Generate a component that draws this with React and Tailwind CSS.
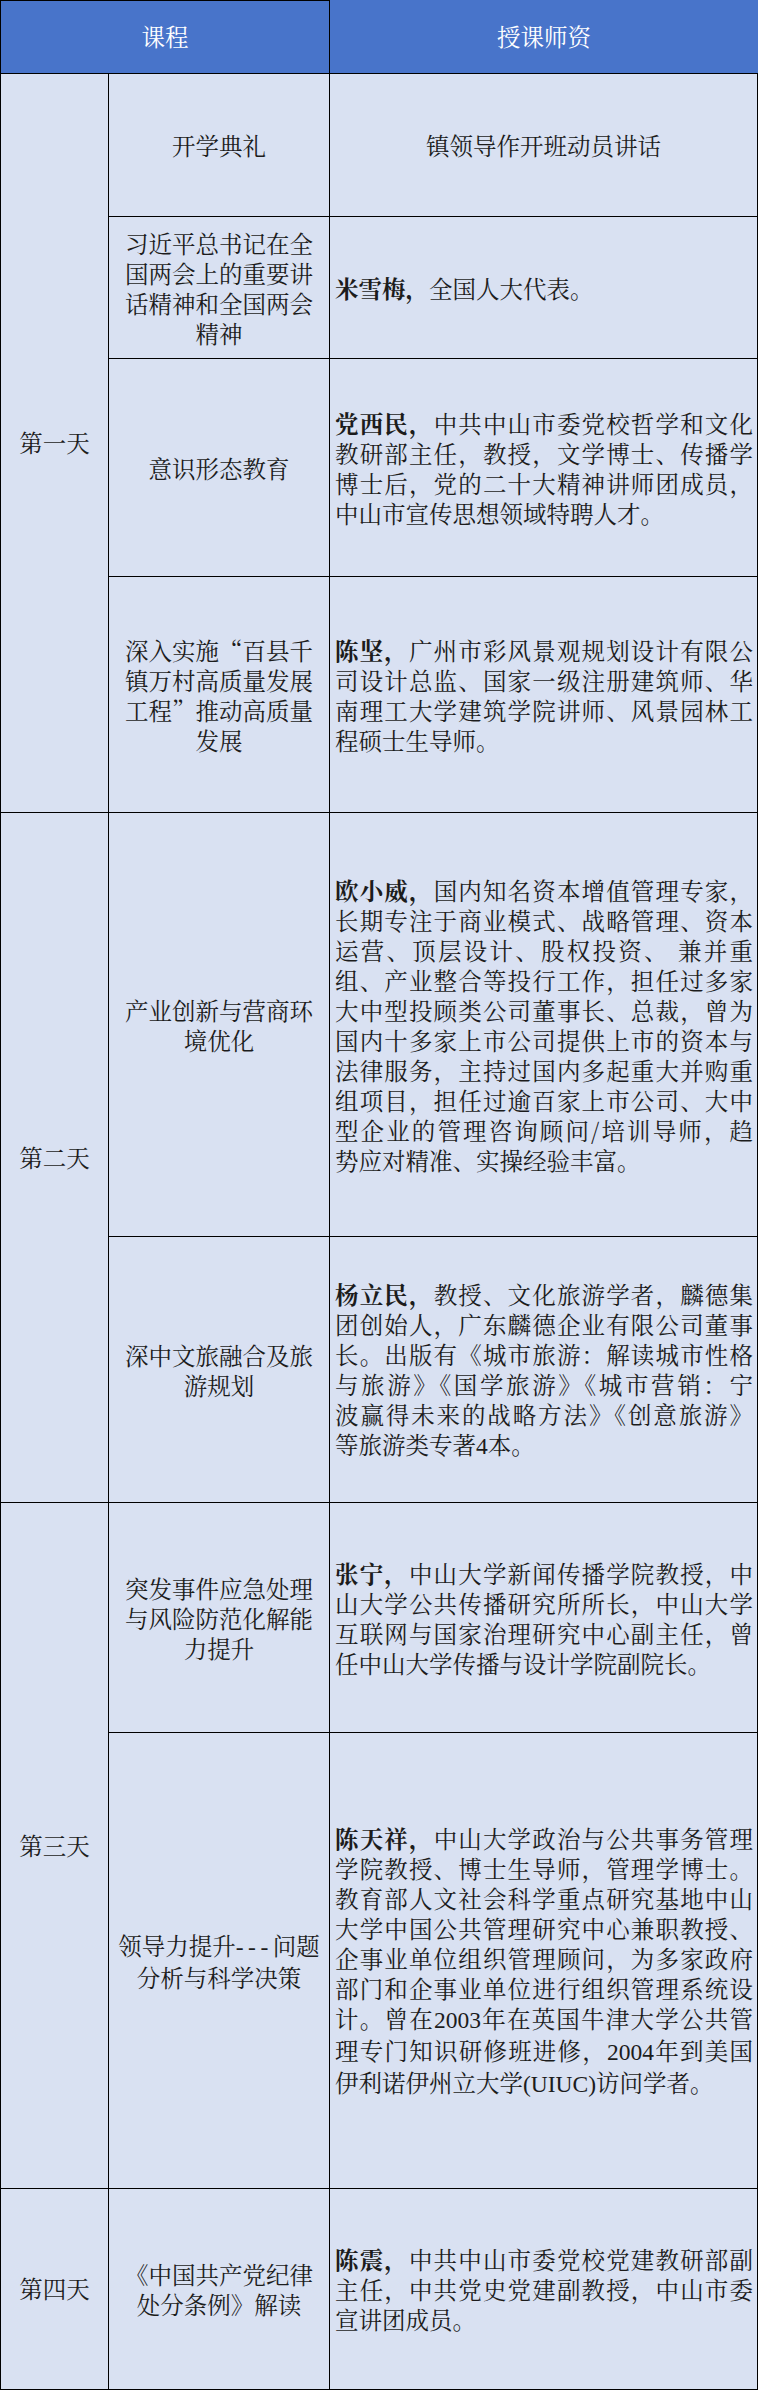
import React from "react";

const days = [
  {
    day: "第一天",
    rows: [
      { h: "h-[143px]", mid: ["开学典礼"], center: true, lines: ["镇领导作开班动员讲话"] },
      {
        h: "h-[142px]",
        mid: ["习近平总书记在全", "国两会上的重要讲", "话精神和全国两会", "精神"],
        name: "米雪梅，",
        lines: ["全国人大代表。"],
      },
      {
        h: "h-[218px]",
        mid: ["意识形态教育"],
        name: "党西民，",
        lines: [
          "中共中山市委党校哲学和文化",
          "教研部主任，教授，文学博士、传播学",
          "博士后，党的二十大精神讲师团成员，",
          "中山市宣传思想领域特聘人才。",
        ],
      },
      {
        h: "h-[236px]",
        mid: ["深入实施“百县千", "镇万村高质量发展", "工程”推动高质量", "发展"],
        name: "陈坚，",
        lines: [
          "广州市彩风景观规划设计有限公",
          "司设计总监、国家一级注册建筑师、华",
          "南理工大学建筑学院讲师、风景园林工",
          "程硕士生导师。",
        ],
      },
    ],
  },
  {
    day: "第二天",
    rows: [
      {
        h: "h-[424px]",
        mid: ["产业创新与营商环", "境优化"],
        name: "欧小威，",
        lines: [
          "国内知名资本增值管理专家，",
          "长期专注于商业模式、战略管理、资本",
          "运营、顶层设计、股权投资、 兼并重",
          "组、产业整合等投行工作，担任过多家",
          "大中型投顾类公司董事长、总裁，曾为",
          "国内十多家上市公司提供上市的资本与",
          "法律服务，主持过国内多起重大并购重",
          "组项目，担任过逾百家上市公司、大中",
          "型企业的管理咨询顾问/培训导师，趋",
          "势应对精准、实操经验丰富。",
        ],
      },
      {
        h: "h-[266px]",
        mid: ["深中文旅融合及旅", "游规划"],
        name: "杨立民，",
        lines: [
          "教授、文化旅游学者，麟德集",
          "团创始人，广东麟德企业有限公司董事",
          "长。出版有《城市旅游：解读城市性格",
          "与旅游》《国学旅游》《城市营销：宁",
          "波赢得未来的战略方法》《创意旅游》",
          "等旅游类专著4本。",
        ],
      },
    ],
  },
  {
    day: "第三天",
    rows: [
      {
        h: "h-[230px]",
        mid: ["突发事件应急处理", "与风险防范化解能", "力提升"],
        name: "张宁，",
        lines: [
          "中山大学新闻传播学院教授，中",
          "山大学公共传播研究所所长，中山大学",
          "互联网与国家治理研究中心副主任，曾",
          "任中山大学传播与设计学院副院长。",
        ],
      },
      {
        h: "h-[456px]",
        mid: ["领导力提升---问题", "分析与科学决策"],
        name: "陈天祥，",
        lines: [
          "中山大学政治与公共事务管理",
          "学院教授、博士生导师，管理学博士。",
          "教育部人文社会科学重点研究基地中山",
          "大学中国公共管理研究中心兼职教授、",
          "企事业单位组织管理顾问，为多家政府",
          "部门和企事业单位进行组织管理系统设",
          "计。曾在2003年在英国牛津大学公共管",
          "理专门知识研修班进修，2004年到美国",
          "伊利诺伊州立大学(UIUC)访问学者。",
        ],
      },
    ],
  },
  {
    day: "第四天",
    rows: [
      {
        h: "h-[201px]",
        mid: ["《中国共产党纪律", "处分条例》解读"],
        name: "陈震，",
        lines: [
          "中共中山市委党校党建教研部副",
          "主任，中共党史党建副教授，中山市委",
          "宣讲团成员。",
        ],
      },
    ],
  },
];

function Latin({ text }) {
  const parts = text.split(/([0-9A-Z()]+|-+)/);
  return parts.map((p, i) => {
    if (/^-+$/.test(p)) {
      return (
        <span key={i} className="font-['Liberation_Serif',serif] tracking-[4.5px]">
          {p}
        </span>
      );
    }
    if (/^[0-9A-Z()]+$/.test(p)) {
      return (
        <span key={i} className="font-['Liberation_Serif',serif]">
          {p}
        </span>
      );
    }
    return <React.Fragment key={i}>{p}</React.Fragment>;
  });
}

function RightCell({ row }) {
  if (row.center) {
    return (
      <div className="w-[428px] border-r border-black flex items-center justify-center text-center">
        <div className="leading-[30px]">{row.lines[0]}</div>
      </div>
    );
  }
  return (
    <div className="w-[428px] border-r border-black flex flex-col justify-center pl-[5px] pr-[4px]">
      {row.lines.map((line, i) => {
        const last = i === row.lines.length - 1;
        return (
          <div
            key={i}
            className={
              last
                ? "leading-[30px] whitespace-nowrap text-left"
                : "leading-[30px] whitespace-nowrap text-justify [text-align-last:justify]"
            }
          >
            {i === 0 && <span className="font-bold">{row.name}</span>}
            <Latin text={line} />
          </div>
        );
      })}
    </div>
  );
}

export default function App() {
  return (
    <div
      lang="zh-CN"
      className="w-[758px] bg-white text-[23.5px] text-[#1c1c1c] font-['Noto_Serif_CJK_SC','Noto_Sans_CJK_SC',sans-serif]"
    >
      {/* Header */}
      <div className="flex h-[74px] bg-[#4874CA] border-b border-black text-white">
        <div className="w-[330px] border-t border-l border-r border-black flex items-center justify-center">
          课程
        </div>
        <div className="w-[428px] flex items-center justify-center">授课师资</div>
      </div>

      {days.map((d, di) => (
        <div key={di} className="flex bg-[#D9E1F2]">
          <div className="w-[109px] border-l border-r border-b border-black flex items-center justify-center">
            {d.day}
          </div>
          <div className="flex flex-col w-[649px]">
            {d.rows.map((row, ri) => (
              <div key={ri} className={`flex border-b border-black ${row.h}`}>
                <div className="w-[221px] border-r border-black flex flex-col items-center justify-center text-center">
                  {row.mid.map((m, mi) => (
                    <div key={mi} className="leading-[30px] whitespace-nowrap">
                      <Latin text={m} />
                    </div>
                  ))}
                </div>
                <RightCell row={row} />
              </div>
            ))}
          </div>
        </div>
      ))}
    </div>
  );
}
